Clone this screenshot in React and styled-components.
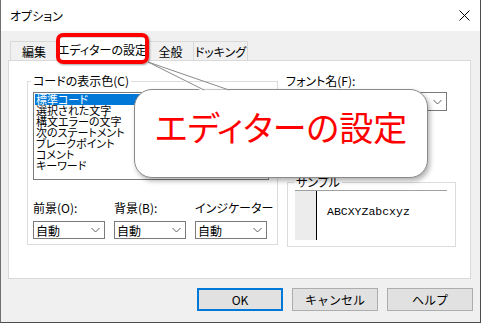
import React from 'react';
import styled, { createGlobalStyle } from 'styled-components';

const Global = createGlobalStyle`
  html, body { margin: 0; padding: 0; background: #ffffff; }
  body {
    font-family: "Noto Sans CJK JP", "Noto Sans", sans-serif;
    font-size: 12px;
    color: #000;
    font-feature-settings: "palt";
  }
  #root { width: 481px; height: 323px; overflow: hidden; }
`;

const Window = styled.div`
  position: relative;
  width: 481px;
  height: 323px;
  box-sizing: border-box;
  display: flex;
  flex-direction: column;
  background: #f0f0f0;
  border-left: 1px solid #707070;
  border-right: 1px solid #4d4d4d;
  border-bottom: 1px solid #4d4d4d;
`;

const TitleBar = styled.div`
  height: 31px;
  flex: none;
  background: #ffffff;
  display: flex;
  align-items: center;
  justify-content: space-between;
  padding: 0 10px 0 9px;
`;

const Title = styled.span`
  font-size: 12px;
  line-height: 14px;
`;

const Body = styled.div`
  flex: 1;
  display: flex;
  flex-direction: column;
  padding: 7px 9px 0 7px;
`;

const TabRow = styled.div`
  height: 23px;
  display: flex;
  align-items: flex-end;
  padding-left: 3px;
  margin-bottom: -1px;
  position: relative;
  z-index: 1;
`;

const Tab = styled.div`
  box-sizing: border-box;
  width: ${p => p.$w}px;
  height: ${p => (p.$active ? 24 : 20)}px;
  margin-left: -1px;
  border: 1px solid #d9d9d9;
  border-bottom: ${p => (p.$active ? 'none' : '1px solid #d9d9d9')};
  background: ${p => (p.$active ? '#ffffff' : '#f0f0f0')};
  display: flex;
  align-items: center;
  justify-content: center;
  font-size: 12px;
  line-height: 14px;
  white-space: nowrap;
  padding-top: ${p => (p.$active ? 0 : 1)}px;
`;

const Panel = styled.div`
  box-sizing: border-box;
  height: 219px;
  background: #ffffff;
  border: 1px solid #d9d9d9;
  display: flex;
  align-items: flex-start;
  padding: 13px 0 0 18px;
`;

const GroupBox = styled.fieldset`
  box-sizing: border-box;
  width: ${p => p.$w}px;
  height: ${p => p.$h}px;
  margin: ${p => p.$mt || 0}px 0 0 ${p => p.$ml || 0}px;
  padding: 0 5px 5px ${p => p.$pl || 5}px;
  border: 1px solid #dcdcdc;
  display: flex;
  flex-direction: column;
  min-width: 0;
`;

const Legend = styled.legend`
  padding: 0 2px;
  margin-left: ${p => p.$ml || -2}px;
  font-size: 12px;
  line-height: 14px;
`;

const ListBox = styled.div`
  box-sizing: border-box;
  width: 236px;
  height: 88px;
  margin-top: 4px;
  border: 1px solid #7a7a7a;
  background: #fff;
  padding: 1px;
  display: flex;
  flex-direction: column;
`;

const ListItem = styled.div`
  height: 11px;
  line-height: 11px;
  font-size: 11px;
  padding-left: 1px;
  white-space: nowrap;
  background: ${p => (p.$sel ? '#0078d7' : 'transparent')};
  color: ${p => (p.$sel ? '#ffffff' : '#000000')};
`;

const ColorRow = styled.div`
  display: flex;
  gap: 9px;
  margin-top: 21px;
`;

const Field = styled.div`
  display: flex;
  flex-direction: column;
`;

const Label = styled.span`
  font-size: 12px;
  line-height: 14px;
  white-space: nowrap;
`;

const Combo = styled.div`
  box-sizing: border-box;
  width: ${p => p.$w}px;
  height: ${p => p.$h || 18}px;
  margin-top: ${p => p.$mt || 6}px;
  border: 1px solid #7a7a7a;
  background: #fff;
  display: flex;
  align-items: center;
  justify-content: space-between;
  padding: 0 4px 0 2px;
  font-size: 12px;
`;

const RightCol = styled.div`
  display: flex;
  flex-direction: column;
  margin-left: 8px;
`;

const SampleBox = styled.div`
  box-sizing: border-box;
  width: 152px;
  height: 50px;
  margin-top: 1px;
  border-top: 1px solid #a0a0a0;
  display: flex;
`;

const Gutter = styled.div`
  width: 21px;
  background: #ececec;
  border-right: 1px solid #000;
`;

const SampleText = styled.div`
  font-family: "Liberation Mono", "DejaVu Sans Mono", monospace;
  font-feature-settings: normal;
  font-size: 11.5px;
  padding: 14px 0 0 10px;
`;

const ButtonRow = styled.div`
  display: flex;
  justify-content: flex-end;
  gap: 9px;
  margin: 9px -2px 0 0;
`;

const Button = styled.button`
  box-sizing: border-box;
  width: 86px;
  height: 23px;
  padding: 0;
  background: #e1e1e1;
  border: ${p => (p.$default ? '2px solid #0078d7' : '1px solid #adadad')};
  font-family: "Noto Sans CJK JP", "Noto Sans", sans-serif;
  font-size: 12px;
  color: #000;
`;

const RedFrame = styled.div`
  position: absolute;
  left: 55px;
  top: 33px;
  width: 93px;
  height: 31px;
  box-sizing: border-box;
  border: 4px solid #ff0000;
  border-radius: 7px;
  box-shadow: 1px 1px 2px rgba(0, 0, 0, 0.35);
  z-index: 5;
`;

const Callout = styled.div`
  position: absolute;
  left: 133px;
  top: 89px;
  width: 294px;
  height: 89px;
  box-sizing: border-box;
  background: #ffffff;
  border: 1px solid #8a8a8a;
  border-radius: 18px;
  box-shadow: 2px 3px 5px rgba(0, 0, 0, 0.3);
  display: flex;
  align-items: center;
  justify-content: center;
  padding-bottom: 14px;
  z-index: 3;
`;

const CalloutText = styled.span`
  color: #ff0000;
  font-size: 34px;
  line-height: 1;
  white-space: nowrap;
`;

const Tail = styled.svg`
  position: absolute;
  left: 139px;
  top: 55px;
  z-index: 4;
`;

const Chevron = () => (
  <svg width="9" height="6" viewBox="0 0 9 6">
    <polyline points="0.5,1 4.5,5 8.5,1" fill="none" stroke="#606060" strokeWidth="1" />
  </svg>
);

const CloseIcon = () => (
  <svg width="11" height="11" viewBox="0 0 11 11">
    <path d="M0.5 0.5 L10.5 10.5 M10.5 0.5 L0.5 10.5" stroke="#000" strokeWidth="1" />
  </svg>
);

const items = ['標準コード', '選択された文字', '構文エラーの文字', '次のステートメント', 'ブレークポイント', 'コメント', 'キーワード'];
const tabs = [
  { label: '編集', w: 48 },
  { label: 'エディターの設定', w: 91, active: true },
  { label: '全般', w: 47 },
  { label: 'ドッキング', w: 55 },
];
const colorFields = ['前景(O):', '背景(B):', 'インジケーター'];

export default function App() {
  return (
    <>
      <Global />
      <Window>
        <TitleBar>
          <Title>オプション</Title>
          <CloseIcon />
        </TitleBar>
        <Body>
          <TabRow>
            {tabs.map(t => (
              <Tab key={t.label} $w={t.w} $active={t.active}>{t.label}</Tab>
            ))}
          </TabRow>
          <Panel>
            <GroupBox $w={251} $h={171}>
              <Legend>コードの表示色(C)</Legend>
              <ListBox>
                {items.map((it, i) => (
                  <ListItem key={it} $sel={i === 0}>{it}</ListItem>
                ))}
              </ListBox>
              <ColorRow>
                {colorFields.map(f => (
                  <Field key={f}>
                    <Label>{f}</Label>
                    <Combo $w={72}>
                      <span>自動</span>
                      <Chevron />
                    </Combo>
                  </Field>
                ))}
              </ColorRow>
            </GroupBox>
            <RightCol>
              <Label>フォント名(F):</Label>
              <Combo $w={161} $h={19} $mt={4}>
                <span />
                <Chevron />
              </Combo>
              <GroupBox $w={169} $h={72} $ml={1} $pl={7} $mt={64}>
                <Legend $ml={-1}>サンプル</Legend>
                <SampleBox>
                  <Gutter />
                  <SampleText>ABCXYZabcxyz</SampleText>
                </SampleBox>
              </GroupBox>
            </RightCol>
          </Panel>
          <ButtonRow>
            <Button $default>OK</Button>
            <Button>キャンセル</Button>
            <Button>ヘルプ</Button>
          </ButtonRow>
        </Body>
        <Callout>
          <CalloutText>エディターの設定</CalloutText>
        </Callout>
        <Tail width="95" height="40" viewBox="0 0 95 40">
          <polygon points="8,7 64,34.5 89,34.5 89,37 64,37" fill="#ffffff" />
          <polyline points="64,35 8,7 89,35" fill="none" stroke="#8a8a8a" strokeWidth="1" />
        </Tail>
        <RedFrame />
      </Window>
    </>
  );
}
